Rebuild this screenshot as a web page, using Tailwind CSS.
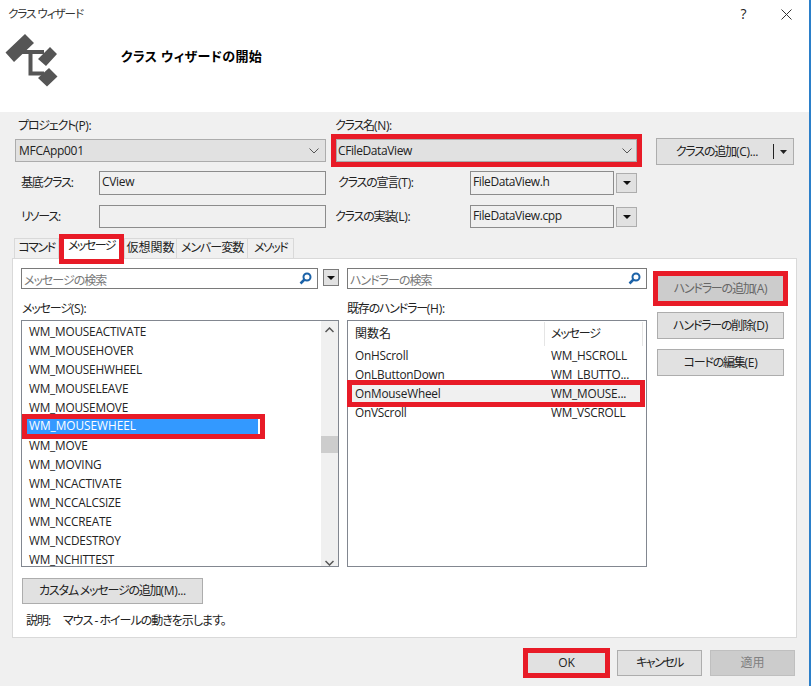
<!DOCTYPE html>
<html lang="ja">
<head>
<meta charset="utf-8">
<script src="https://cdn.jsdelivr.net/npm/@tailwindcss/browser@4"></script>
</head>
<body class="m-0">
<div class="w-[811px] h-[686px] overflow-hidden bg-[#f0f0f0] border-r-2 border-r-[#2b7fc9] text-[12px] leading-[16px] tracking-[-1.200px] text-[#222] whitespace-nowrap [font-feature-settings:'palt'] font-['Open_Sans','Noto_Sans_CJK_JP',sans-serif]">

  <!-- header -->
  <div class="h-[112px] bg-white flex flex-col">
    <div class="h-[29px] flex items-start pl-[8px] pt-[6px]">
      <span class="flex-1 text-[11.500px] text-[#333] tracking-[-1px]">クラス ウィザード</span>
      <span class="w-[16px] text-center text-[14px] mr-[30px] mt-[0px]">?</span>
      <svg class="mr-[17px] mt-[3px]" width="11" height="11" viewBox="0 0 11 11"><path d="M0.500 0.500L10.500 10.500M10.500 0.500L0.500 10.500" stroke="#333" fill="none"/></svg>
    </div>
    <div class="flex">
      <svg class="-mt-[1px]" width="121" height="60" viewBox="0 29 121 60">
        <path d="M25 35L34 44L14 63L5.500 53.500Z M50 48L57 55L46 67L38 60Z M49 69L57.500 77.500L47 87.500L38 79Z" fill="#555"/>
        <path d="M22 53H44M30.500 53V74.500H44" stroke="#555" stroke-width="4" fill="none"/>
      </svg>
      <span class="text-[13px] font-bold text-black leading-[18px] mt-[18px] tracking-[0.300px]">クラス ウィザードの開始</span>
    </div>
  </div>

  <!-- top form -->
  <div class="pl-[15px] pt-[6px] flex flex-col">
    <div class="flex h-[54px]">
      <div class="w-[311px]">
        <div class="h-[21px] pl-[3px]">プロジェクト<span class="tracking-[-0.300px]">(P):</span></div>
        <div class="h-[23px] bg-[#e1e1e1] border border-[#acacac] flex items-center pl-[3px] pr-[6px]">
          <span class="flex-1 tracking-[-0.300px]">MFCApp001</span>
          <svg width="10" height="6" viewBox="0 0 10 6"><path d="M0.500 0.500L5 5L9.500 0.500" stroke="#555" fill="none"/></svg>
        </div>
      </div>
      <div class="w-[301px] ml-[10px]">
        <div class="h-[21px] -ml-px">クラス名<span class="tracking-[-0.300px]">(N):</span></div>
        <div class="h-[23px] bg-[#e1e1e1] border border-[#acacac] outline-[5px] outline-[#e81b27] flex items-center pl-[1px] pr-[4px]">
          <span class="flex-1 tracking-[-0.400px]">CFileDataView</span>
          <svg width="10" height="6" viewBox="0 0 10 6"><path d="M0.500 0.500L5 5L9.500 0.500" stroke="#555" fill="none"/></svg>
        </div>
      </div>
      <div class="w-[138px] h-[27px] mt-[20px] ml-[19px] bg-[#e1e1e1] border border-[#adadad] flex items-center">
        <span class="flex-1 text-center pl-[4px]">クラスの追加<span class="tracking-[-0.300px]">(C)...</span></span>
        <span class="w-px h-[15px] bg-[#222]"></span>
        <svg class="mx-[6px]" width="7" height="4" viewBox="0 0 7 4"><path d="M0 0H7L3.500 4Z" fill="#222"/></svg>
      </div>
    </div>

    <div class="flex items-center h-[24px] mt-[-1px]">
      <span class="w-[84px] pl-[6px]">基底クラス:</span>
      <div class="w-[227px] h-full border border-[#8c8c8c] pl-[2px] leading-[20px] tracking-[-0.300px]">CView</div>
      <span class="w-[134px] pl-[2px] ml-[10px]">クラスの宣言<span class="tracking-[-0.300px]">(T):</span></span>
      <div class="w-[144px] h-full border border-[#8c8c8c] bg-[#f0f0f0] pl-[2px] leading-[20px] tracking-[-0.400px]">FileDataView.h</div>
      <div class="w-[21px] h-[20px] ml-[2px] bg-[#e1e1e1] border border-[#adadad] flex items-center justify-center">
        <svg width="8" height="4" viewBox="0 0 8 4"><path d="M0 0H8L4 4Z" fill="#111"/></svg>
      </div>
    </div>

    <div class="flex items-center h-[23px] mt-[10px]">
      <span class="w-[84px] pl-[6px]">リソース:</span>
      <div class="w-[227px] h-full border border-[#8c8c8c]"></div>
      <span class="w-[134px] ml-[9px] mr-[1px]">クラスの実装<span class="tracking-[-0.300px]">(L):</span></span>
      <div class="w-[144px] h-full border border-[#8c8c8c] pl-[2px] leading-[19px] tracking-[-0.400px]">FileDataView.cpp</div>
      <div class="w-[21px] h-[20px] ml-[2px] bg-[#e1e1e1] border border-[#adadad] flex items-center justify-center">
        <svg width="8" height="4" viewBox="0 0 8 4"><path d="M0 0H8L4 4Z" fill="#111"/></svg>
      </div>
    </div>
  </div>

  <!-- tabs -->
  <div class="flex items-end h-[20px] mt-[10px] pl-[14px] leading-[18px]">
    <div class="w-[45px] h-[20px] border border-b-0 border-[#d9d9d9] text-center tracking-[-1.500px]">コマンド</div>
    <div class="w-[55px] h-[20px] mx-[5px] -mb-px bg-white text-center leading-[13px] tracking-[-1.500px] outline-[5px] outline-[#e81b27] relative z-10">メッセージ</div>
    <div class="w-[53px] h-[20px] border border-b-0 border-[#d9d9d9] text-center tracking-normal">仮想関数</div>
    <div class="w-[71px] h-[20px] border border-b-0 border-l-0 border-[#d9d9d9] text-center tracking-[-1px]">メンバー変数</div>
    <div class="w-[46px] h-[20px] border border-b-0 border-l-0 border-[#d9d9d9] text-center tracking-[-1.500px]">メソッド</div>
  </div>

  <!-- panel -->
  <div class="w-[785px] h-[380px] ml-[12px] bg-white border border-[#d9d9d9] flex pl-[8px] pt-[9px]">
    <!-- left column -->
    <div class="w-[318px] flex flex-col">
      <div class="flex h-[21px]">
        <div class="w-[297px] border border-[#7a7a7a] flex items-center pl-[2px] pr-[5px] text-[#777]">
          <span class="flex-1 pt-[5px] tracking-[-1px]">メッセージの検索</span>
          <svg width="13" height="13" viewBox="0 0 13 13"><circle cx="8" cy="5" r="3.500" stroke="#1b62a8" stroke-width="2" fill="none"/><path d="M5.500 7.500L1.500 11.500" stroke="#1b62a8" stroke-width="2.500"/></svg>
        </div>
        <div class="w-[16px] h-[17px] mt-[1px] ml-[5px] bg-[#e1e1e1] border border-[#7a7a7a] flex items-center justify-center">
          <svg width="8" height="4" viewBox="0 0 8 4"><path d="M0 0H8L4 4Z" fill="#111"/></svg>
        </div>
      </div>
      <div class="h-[31px] pl-[1px] pt-[12px]">メッセージ<span class="tracking-[-0.300px]">(S):</span></div>
      <div class="h-[247px] border border-[#828790] flex overflow-hidden">
        <div class="flex-1 overflow-hidden pt-[1px] leading-[19px] text-[11.800px] tracking-[-0.200px]">
          <div class="h-[19px] pl-[7px]">WM_MOUSEACTIVATE</div>
          <div class="h-[19px] pl-[7px]">WM_MOUSEHOVER</div>
          <div class="h-[19px] pl-[7px]">WM_MOUSEHWHEEL</div>
          <div class="h-[19px] pl-[7px]">WM_MOUSELEAVE</div>
          <div class="h-[19px] pl-[7px]">WM_MOUSEMOVE</div>
          <div class="h-[21px] -my-px relative ml-[2px] w-[239px] flex bg-[#3399ff] text-white pl-[5px] z-10 outline-[5px] -outline-offset-[3px] outline-[#e81b27]">
            <span class="flex-1 tracking-normal">WM_MOUSEWHEEL</span>
            <span class="w-[2px] h-full mr-[3px] bg-white"></span>
          </div>
          <div class="h-[19px] pl-[7px]">WM_MOVE</div>
          <div class="h-[19px] pl-[7px]">WM_MOVING</div>
          <div class="h-[19px] pl-[7px]">WM_NCACTIVATE</div>
          <div class="h-[19px] pl-[7px]">WM_NCCALCSIZE</div>
          <div class="h-[19px] pl-[7px]">WM_NCCREATE</div>
          <div class="h-[19px] pl-[7px]">WM_NCDESTROY</div>
          <div class="h-[19px] pl-[7px]">WM_NCHITTEST</div>
        </div>
        <div class="w-[17px] bg-[#f0f0f0] flex flex-col items-center">
          <svg class="mt-[6px]" width="9" height="6" viewBox="0 0 9 6"><path d="M0.500 5L4.500 1L8.500 5" stroke="#555" stroke-width="1.500" fill="none"/></svg>
          <div class="w-full h-[17px] bg-[#cdcdcd] mt-[103px]"></div>
          <svg class="mt-[107px]" width="9" height="6" viewBox="0 0 9 6"><path d="M0.500 1L4.500 5L8.500 1" stroke="#555" stroke-width="1.500" fill="none"/></svg>
        </div>
      </div>
      <div class="w-[181px] h-[26px] mt-[11px] ml-px bg-[#e1e1e1] border border-[#adadad] flex items-center justify-center">カスタム メッセージの追加<span class="tracking-[-0.300px]">(M)...</span></div>
      <div class="mt-[9px] pl-[5px] flex tracking-[-1px]"><span class="w-[37px]">説明:</span><span>マウス - ホイールの動きを示します。</span></div>
    </div>

    <!-- middle column -->
    <div class="w-[300px] ml-[8px] flex flex-col">
      <div class="h-[21px] border border-[#7a7a7a] flex items-center pl-[2px] pr-[5px] text-[#777]">
        <span class="flex-1 pt-[5px] tracking-[-1px]">ハンドラーの検索</span>
        <svg width="13" height="13" viewBox="0 0 13 13"><circle cx="8" cy="5" r="3.500" stroke="#1b62a8" stroke-width="2" fill="none"/><path d="M5.500 7.500L1.500 11.500" stroke="#1b62a8" stroke-width="2.500"/></svg>
      </div>
      <div class="h-[31px] pt-[12px]">既存のハンドラー<span class="tracking-[-0.300px]">(H):</span></div>
      <div class="h-[247px] border border-[#828790] flex flex-col">
        <div class="h-[24px] flex items-center mt-px">
          <span class="w-[197px] pl-[7px] h-full leading-[23px] border-r border-[#e5e5e5] tracking-normal">関数名</span>
          <span class="w-[98px] pl-[6px] h-full leading-[23px] border-r border-[#e5e5e5]">メッセージ</span>
        </div>
        <div class="leading-[19px] text-[11.800px] tracking-[-0.200px]">
          <div class="h-[19px] flex"><span class="w-[197px] pl-[7px]">OnHScroll</span><span class="pl-[6px]">WM_HSCROLL</span></div>
          <div class="h-[19px] flex"><span class="w-[197px] pl-[7px]">OnLButtonDown</span><span class="pl-[6px]">WM_LBUTTO...</span></div>
          <div class="h-[19px] flex bg-[#f0f0f0] ml-[3px] w-[290px] relative outline-[5px] -outline-offset-[1px] outline-[#e81b27]"><span class="w-[194px] pl-[4px]">OnMouseWheel</span><span class="pl-[6px]">WM_MOUSE...</span></div>
          <div class="h-[19px] flex"><span class="w-[197px] pl-[7px]">OnVScroll</span><span class="pl-[6px]">WM_VSCROLL</span></div>
        </div>
      </div>
    </div>

    <!-- right column -->
    <div class="w-[127px] ml-[10px] flex flex-col pt-[7px] gap-[10px]">
      <div class="h-[27px] bg-[#cccccc] border border-[#bfbfbf] text-[#666] flex items-center justify-center outline-[5px] outline-[#e81b27] -outline-offset-[1px]">ハンドラーの追加<span class="tracking-[-0.300px]">(A)</span></div>
      <div class="h-[27px] bg-[#e1e1e1] border border-[#adadad] flex items-center justify-center">ハンドラーの削除<span class="tracking-[-0.300px]">(D)</span></div>
      <div class="h-[27px] bg-[#e1e1e1] border border-[#adadad] flex items-center justify-center">コードの編集<span class="tracking-[-0.300px]">(E)</span></div>
    </div>
  </div>

  <!-- footer -->
  <div class="flex justify-end gap-[8px] pr-[14px] pt-[12px]">
    <div class="w-[77px] h-[20px] mt-[3px] mr-[4px] bg-[#e1e1e1] flex items-center justify-center tracking-normal outline-[5px] outline-[#e81b27]">OK</div>
    <div class="w-[85px] h-[26px] bg-[#e1e1e1] border border-[#adadad] flex items-center justify-center tracking-[-1.500px]">キャンセル</div>
    <div class="w-[85px] h-[26px] bg-[#cccccc] border border-[#bfbfbf] text-[#808080] flex items-center justify-center tracking-normal">適用</div>
  </div>
</div>
</body>
</html>
